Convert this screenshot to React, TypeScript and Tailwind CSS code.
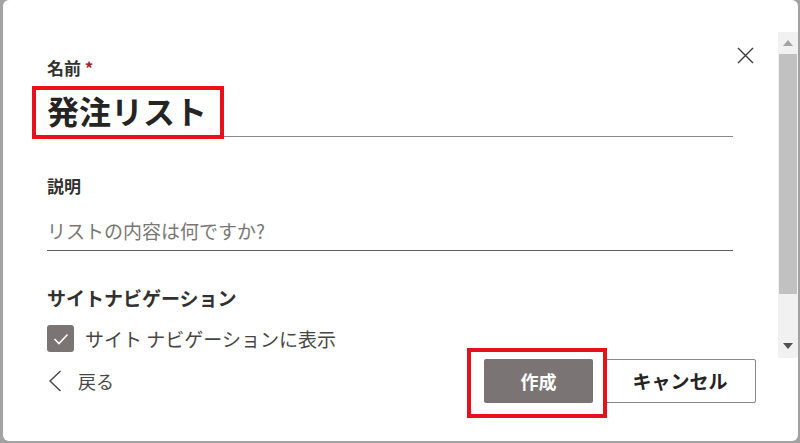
import React from "react";

const jp = { fontFamily: '"Noto Sans CJK JP", "Noto Sans", sans-serif' };

function Scrollbar() {
  return (
    <div className="mt-[32px] flex h-[326px] w-[20px] flex-col bg-[#f1f1f1]">
      <div className="flex h-[22px] items-center justify-center">
        <svg width="10" height="6" viewBox="0 0 10 6">
          <polygon points="0,6 5,0 10,6" fill="#a3a3a3" />
        </svg>
      </div>
      <div className="mx-[1px] h-[240px] bg-[#c1c1c1]" />
      <div className="flex flex-1 items-end justify-center pb-[9px]">
        <svg width="10" height="6" viewBox="0 0 10 6">
          <polygon points="0,0 10,0 5,6" fill="#505050" />
        </svg>
      </div>
    </div>
  );
}

export default function App() {
  return (
    <div
      className="flex h-[443px] w-[800px] bg-[#a2a2a2] pb-[2px] pl-[3px] pr-[2px]"
      style={jp}
    >
      <div className="relative flex flex-1 flex-col rounded-[6px] bg-white text-[#323130]">
        {/* close */}
        <button className="absolute right-[44px] top-[47px] h-[17px] w-[17px]">
          <svg width="17" height="17" viewBox="0 0 17 17">
            <path d="M1 1 L16 16 M16 1 L1 16" stroke="#3b3a39" strokeWidth="1.4" />
          </svg>
        </button>

        {/* body */}
        <div className="flex h-[358px] justify-between">
          <div className="w-[730px] pl-[44px] pt-[56px]">
            <div className="text-[17px] font-bold leading-[24px]">
              名前 <span className="text-[#a4262c]">*</span>
            </div>
            <div className="mt-[11px] border-b border-[#8a8886] pb-[6px] text-[32px] font-bold leading-[39px] text-[#252423]">
              発注リスト
            </div>

            <div className="mt-[37px] text-[17px] font-bold leading-[24px]">説明</div>
            <div className="mt-[19px] border-b border-[#605e5c] pb-[6px] text-[19px] leading-[27px] text-[#797775]">
              リストの内容は何ですか?
            </div>

            <div className="mt-[34px] text-[19px] font-bold leading-[26px]">
              サイトナビゲーション
            </div>
            <div className="mt-[14px] flex items-center gap-[11px]">
              <div className="flex h-[27px] w-[27px] items-center justify-center rounded-[3px] bg-[#7a7574]">
                <svg width="16" height="12" viewBox="0 0 16 12">
                  <polyline points="1.5,6 6,10.5 14.5,1.5" fill="none" stroke="white" strokeWidth="1.6" />
                </svg>
              </div>
              <span className="text-[19px] leading-[26px] text-[#484644]">
                サイト ナビゲーションに表示
              </span>
            </div>
          </div>
          <Scrollbar />
        </div>

        {/* footer */}
        <div className="flex h-[46px] items-center justify-between pl-[45px] pr-[42px]">
          <button className="flex items-center gap-[16px] text-[18px] text-[#484644]">
            <svg width="14" height="22" viewBox="0 0 14 22">
              <polyline points="12.5,1 2,11 12.5,21" fill="none" stroke="#484644" strokeWidth="1.4" />
            </svg>
            戻る
          </button>
          <div className="flex gap-[11px]">
            <button className="h-[44px] w-[109px] rounded-[2px] bg-[#7a7574] text-[18px] font-bold text-white">
              作成
            </button>
            <button className="h-[44px] w-[152px] rounded-[2px] border border-[#8a8886] bg-white text-[19px] font-bold text-[#252423]">
              キャンセル
            </button>
          </div>
        </div>

        {/* annotation boxes */}
        <div className="pointer-events-none absolute left-[29px] top-[86px] h-[53px] w-[192px] border-[4px] border-[#e8101c]" />
        <div className="pointer-events-none absolute left-[464px] top-[348px] h-[70px] w-[140px] border-[4px] border-[#e8101c]" />
      </div>
    </div>
  );
}
